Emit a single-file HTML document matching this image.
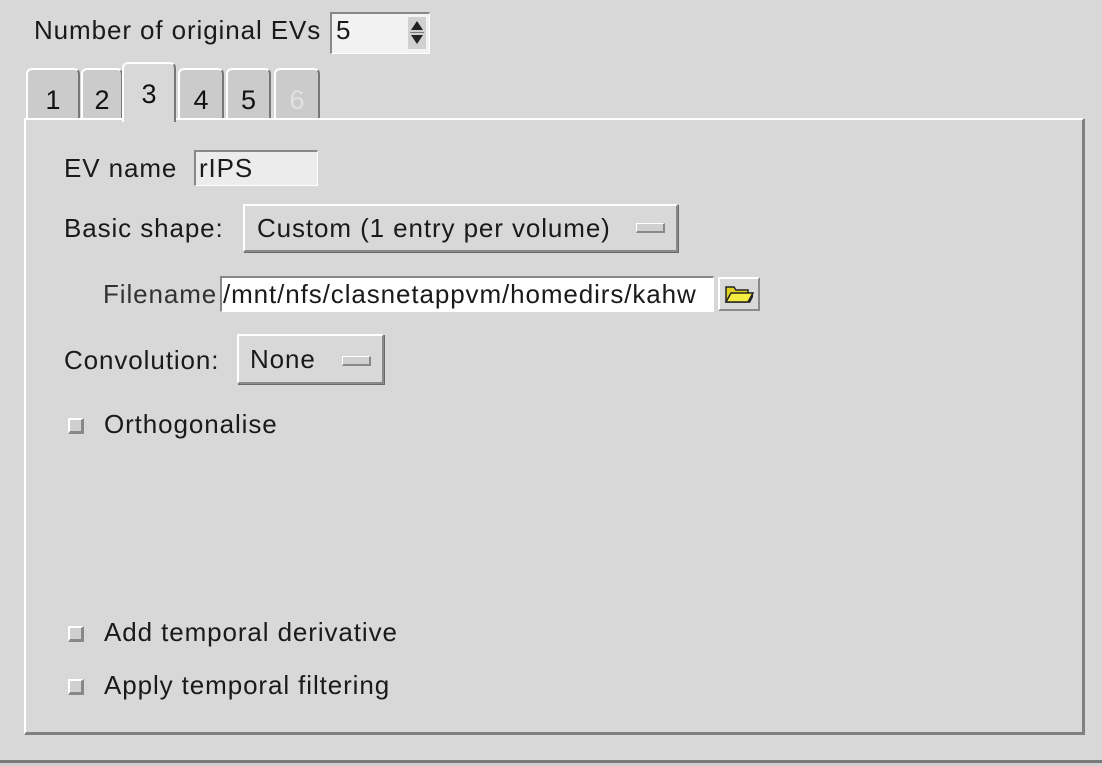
<!DOCTYPE html>
<html><head><meta charset="utf-8"><style>
html,body{margin:0;padding:0}
body{width:1102px;height:766px;background:#d8d8d8;position:relative;overflow:hidden;font-family:"Liberation Sans",sans-serif;color:#1a1a1a;font-size:26px;letter-spacing:0.9px}
.a{position:absolute;white-space:nowrap}
.tab{position:absolute;background:#cbcbcb;border-left:2px solid #fff;border-top:2px solid #fff;border-right:2px solid #777;border-radius:6px 6px 0 0;box-sizing:border-box;text-align:center;font-size:27px;color:#111;letter-spacing:0}
.btn{position:absolute;background:#d8d8d8;border-top:2px solid #fff;border-left:2px solid #fff;border-right:2px solid #8a8a8a;border-bottom:2px solid #8a8a8a;box-sizing:border-box;box-shadow:1px 1px 0 #6a6a6a}
.ind{position:absolute;width:26px;height:7px;background:#d0d0d0;border-top:1px solid #fff;border-left:1px solid #fff;border-right:2px solid #888;border-bottom:2px solid #888}
.entry{position:absolute;box-sizing:border-box;border-top:2px solid #888;border-left:2px solid #888;border-right:1px solid #fff;border-bottom:1px solid #fff}
.cb{position:absolute;width:16px;height:16px;box-sizing:border-box;background:#d0d0d0;border-top:2px solid #fff;border-left:2px solid #fff;border-right:3px solid #888;border-bottom:3px solid #888}
</style></head><body>
<div class="a" style="left:34px;top:15px">Number of original EVs</div>
<div class="entry" style="left:330px;top:12px;width:100px;height:42px;background:#f2f2f2"></div>
<div class="a" style="left:336px;top:15px">5</div>
<svg class="a" style="left:408px;top:17px" width="18" height="32" viewBox="0 0 18 32"><rect x="0" y="0" width="18" height="32" fill="#d0d0d0"/><path d="M3 13 L9 4 L15 13Z" fill="#222"/><path d="M3 18 L9 27 L15 18Z" fill="#222"/><line x1="2" y1="15.5" x2="16" y2="15.5" stroke="#777"/></svg>

<div class="tab" style="left:26px;top:68px;width:54px;height:52px;line-height:60px">1</div>
<div class="tab" style="left:81px;top:68px;width:42px;height:52px;line-height:60px">2</div>
<div class="tab" style="left:178px;top:68px;width:46px;height:52px;line-height:60px">4</div>
<div class="tab" style="left:226px;top:68px;width:45px;height:52px;line-height:60px">5</div>
<div class="tab" style="left:274px;top:68px;width:46px;height:52px;line-height:60px;color:#e2e2e2">6</div>

<div style="position:absolute;left:24px;top:118px;width:1061px;height:617px;box-sizing:border-box;border-left:2px solid #fff;border-top:2px solid #fff;border-right:3px solid #808080;border-bottom:3px solid #808080;background:#d8d8d8"></div>
<div class="tab" style="left:122px;top:62px;width:54px;height:60px;line-height:60px;background:#d8d8d8;border-bottom:none">3</div>

<div class="a" style="left:64px;top:153px">EV name</div>
<div class="entry" style="left:194px;top:150px;width:124px;height:36px;background:#ececec"></div>
<div class="a" style="left:199px;top:153px">rIPS</div>

<div class="a" style="left:64px;top:213px">Basic shape:</div>
<div class="btn" style="left:243px;top:204px;width:435px;height:48px"></div>
<div class="a" style="left:257px;top:213px">Custom (1 entry per volume)</div>
<div class="ind" style="left:636px;top:223px"></div>

<div class="a" style="left:103px;top:279px;color:#333">Filename</div>
<div class="entry" style="left:220px;top:276px;width:494px;height:36px;background:#fff"></div>
<div class="a" style="left:223px;top:279px">/mnt/nfs/clasnetappvm/homedirs/kahw</div>
<div class="btn" style="left:718px;top:277px;width:42px;height:34px;box-shadow:none"></div>
<svg class="a" style="left:724px;top:283px" width="30" height="22" viewBox="0 0 30 22"><path d="M2 4 L10 4 L12 7 L24 7 L24 19 L2 19Z" fill="#e0d020" stroke="#222" stroke-width="1.5"/><path d="M2 19 L7 10 L29 10 L24 19Z" fill="#f4ec40" stroke="#222" stroke-width="1.5"/><path d="M24 19 L29 10 L29 14 L26 20Z" fill="#222"/></svg>

<div class="a" style="left:64px;top:345px">Convolution:</div>
<div class="btn" style="left:237px;top:334px;width:147px;height:50px"></div>
<div class="a" style="left:250px;top:344px">None</div>
<div class="ind" style="left:342px;top:356px"></div>

<div class="cb" style="left:68px;top:418px"></div>
<div class="a" style="left:104px;top:409px">Orthogonalise</div>
<div class="cb" style="left:68px;top:626px"></div>
<div class="a" style="left:104px;top:617px">Add temporal derivative</div>
<div class="cb" style="left:68px;top:679px"></div>
<div class="a" style="left:104px;top:670px">Apply temporal filtering</div>

<div style="position:absolute;left:0;top:760px;width:1102px;height:3px;background:#7a7a7a"></div>
<div style="position:absolute;left:0;top:763px;width:1102px;height:3px;background:#cfcfcf"></div>
</body></html>
